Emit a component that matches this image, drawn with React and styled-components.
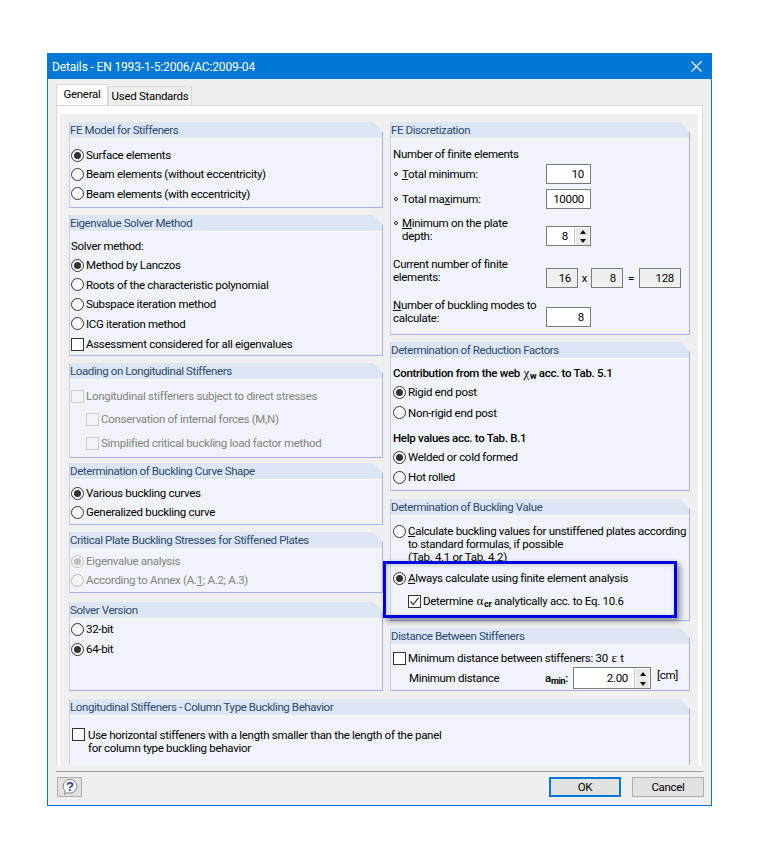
import React from "react";
import styled, { createGlobalStyle } from "styled-components";

const GlobalStyle = createGlobalStyle`
  body {
    margin: 0;
    background: #fff;
    font-family: Roboto, "Noto Sans", sans-serif;
    font-size: 11.5px;
    letter-spacing: -0.3px;
    color: #000;
  }
  * { box-sizing: border-box; }
`;

const Page = styled.div`
  padding: 53px 0 0 47px;
`;

const Window = styled.div`
  width: 665px;
  height: 753px;
  border: 1px solid #0078d7;
  background: #f0f0f0;
`;

const TitleBar = styled.div`
  height: 25px;
  background: #0078d7;
  color: #fff;
  font-size: 12px;
  letter-spacing: -0.15px;
  display: flex;
  align-items: center;
  justify-content: space-between;
  padding: 0 9px 0 4px;
`;

const TabStrip = styled.div`
  height: 26px;
  display: flex;
  align-items: flex-end;
  padding-left: 8px;
`;

const Tab = styled.div`
  height: ${(p) => (p.$active ? "21px" : "19px")};
  width: ${(p) => (p.$active ? "52px" : "84px")};
  background: ${(p) => (p.$active ? "#fff" : "#f0f0f0")};
  border: 1px solid #d9d9d9;
  border-bottom: 0;
  white-space: nowrap;
  display: flex;
  align-items: center;
  justify-content: center;
  padding-bottom: ${(p) => (p.$active ? "3px" : "0")};
`;

const TabPane = styled.div`
  height: 660px;
  margin: 0 8px;
  padding: 8px 4px 0 3px;
  border: 1px solid #d9d9d9;
  border-bottom: 0;
  background: #fff;
`;

const PaneInner = styled.div`
  height: 100%;
  background: #f0f0f0;
  padding: 8px 8px 0 9px;
  overflow: hidden;
`;

const Columns = styled.div`
  display: grid;
  grid-template-columns: 314px 300px;
  column-gap: 7px;
`;

const Column = styled.div`
  position: relative;
  display: flex;
  flex-direction: column;
`;

const Panel = styled.section`
  height: ${(p) => p.$h}px;
  margin-top: ${(p) => p.$mt || 0}px;
  background: #f0f4fa;
  border-left: 1px solid #c4ccf0;
  border-right: 1px solid #a9aeec;
  border-bottom: 1px solid #a9aeec;
  clip-path: polygon(0 0, calc(100% - 10px) 0, 100% 10px, 100% 100%, 0 100%);
`;

const PanelTitle = styled.div`
  height: 17px;
  line-height: 16px;
  background: #dce6f4;
  border-bottom: 1px solid #fff;
  color: #2b4a72;
  letter-spacing: -0.4px;
`;

const PanelBody = styled.div`
  padding: ${(p) => p.$pt || 0}px 0 0 ${(p) => (p.$right ? 2 : 1)}px;
`;

const Row = styled.div`
  display: flex;
  align-items: center;
  gap: 2px;
  height: ${(p) => p.$h || 20}px;
  margin-top: ${(p) => p.$mt || 0}px;
  margin-left: ${(p) => p.$indent || 0}px;
  color: ${(p) => (p.$disabled ? "#838383" : "#000")};
`;

const TopRow = styled(Row)`
  align-items: flex-start;
`;

const WideRow = styled(TopRow)`
  gap: 3px;
`;

const Lines = styled.div`
  line-height: 13px;
  margin-top: ${(p) => p.$mt || 0}px;
`;

const Strong = styled.span`
  font-weight: 500;
`;

const RadioMark = styled.span`
  flex: none;
  width: 13px;
  height: 13px;
  border-radius: 50%;
  border: 1px solid ${(p) => (p.$disabled ? "#bdbdbd" : "#333")};
  background: ${(p) => (p.$disabled ? "#f4f4f4" : "#fff")};
  display: flex;
  align-items: center;
  justify-content: center;

  &::after {
    content: "";
    display: ${(p) => (p.$checked ? "block" : "none")};
    width: 7px;
    height: 7px;
    border-radius: 50%;
    background: ${(p) => (p.$disabled ? "#bdbdbd" : "#333")};
  }
`;

const CheckMark = styled.span`
  flex: none;
  width: 13px;
  height: 13px;
  border: 1px solid ${(p) => (p.$disabled ? "#cccccc" : "#333")};
  background: ${(p) => (p.$disabled ? "#f4f4f4" : "#fff")};
  display: flex;
  align-items: center;
  justify-content: center;
`;

const FieldRow = styled.div`
  display: grid;
  grid-template-columns: 153px auto;
  align-items: ${(p) => (p.$top ? "start" : "center")};
  height: ${(p) => p.$h || 20}px;
  margin-top: ${(p) => p.$mt || 0}px;
`;

const Bullet = styled.span`
  display: inline-block;
  width: 4px;
  height: 4px;
  border: 1px solid #222;
  border-radius: 50%;
  margin: 0 4px 1px 1px;
  vertical-align: middle;
`;

const HangIndent = styled.div`
  padding-left: 9px;
`;

const Field = styled.div`
  position: relative;
  display: flex;
  align-items: center;
  justify-content: flex-end;
  width: ${(p) => p.$w || 45}px;
  height: ${(p) => p.$height || 20}px;
  margin-top: ${(p) => p.$mt || 0}px;
  padding-right: ${(p) => p.$pr || 6}px;
  border: 1px solid #7a7a7a;
  background: ${(p) => (p.$readOnly ? "#f0f0f0" : "#fff")};
  flex: none;
`;

const SpinBox = styled.div`
  position: absolute;
  top: 0;
  right: 0;
  bottom: 0;
  width: 16px;
  display: flex;
  flex-direction: column;
  gap: 1px;
  padding: 1px 1px 0;
  background: #fff;
  border-left: 1px solid #c8c8c8;
`;

const SpinButton = styled.span`
  flex: 1;
  background: #e8e8e8;
  display: flex;
  align-items: center;
  justify-content: center;

  &::after {
    content: "";
    border-left: 3.5px solid transparent;
    border-right: 3.5px solid transparent;
    ${(p) => (p.$down ? "border-top" : "border-bottom")}: 4px solid #111;
  }
`;

const ProductRow = styled.div`
  display: flex;
  align-items: center;
`;

const Operator = styled.span`
  width: ${(p) => p.$w}px;
  margin-top: 10px;
  text-align: center;
`;

const Greek = styled.span`
  font-family: "Liberation Serif", serif;
  font-size: 13px;
  margin: 0 1px;
`;

const Sub = styled.sub`
  font-size: 9px;
  font-weight: 700;
  line-height: 0;
  vertical-align: -2px;
`;

const DistanceRow = styled.div`
  display: flex;
  align-items: center;
  height: 22px;
  margin-top: -1px;
  padding-left: 16px;
`;

const DistanceLabel = styled.span`
  width: 136px;
`;

const SymbolLabel = styled.span`
  width: 28px;
  font-weight: 500;
  white-space: nowrap;
`;

const Unit = styled.span`
  margin: -6px 0 0 6px;
`;

const WidePanel = styled(Panel)`
  margin-top: 8px;
  height: 70px;
  border-bottom: 0;
`;

const Highlight = styled.div`
  position: absolute;
  z-index: 2;
  top: 439px;
  left: -7px;
  width: 294px;
  height: 57px;
  border: 3px solid #0000e0;
  box-shadow: 3px 3px 6px rgba(0, 0, 0, 0.45), inset 1px 1px 4px rgba(0, 0, 0, 0.2);
  pointer-events: none;
`;

const Footer = styled.div`
  display: flex;
  align-items: flex-start;
  margin: 6px 8px 0;
  padding-top: 5px;
  border-top: 1px solid #a0a0a0;
`;

const HelpButton = styled.button`
  width: 25px;
  height: 20px;
  margin: 0 auto 0 1px;
  padding: 0;
  display: flex;
  align-items: center;
  justify-content: center;
  background: #e1e1e1;
  border: 1px solid #adadad;
`;

const DialogButton = styled.button`
  width: 72px;
  height: 20px;
  margin-left: 11px;
  padding: 0;
  font: inherit;
  letter-spacing: inherit;
  color: #000;
  background: #e1e1e1;
  border: ${(p) => (p.$primary ? "2px solid #0078d7" : "1px solid #adadad")};
  margin-right: ${(p) => (p.$primary ? 0 : -1)}px;
`;

const CloseIcon = () => (
  <svg width="11" height="11" viewBox="0 0 11 11">
    <path d="M0.5 0.5 10.5 10.5M10.5 0.5 0.5 10.5" stroke="#fff" strokeWidth="1.1" fill="none" />
  </svg>
);

const Tick = () => (
  <svg width="11" height="11" viewBox="0 0 11 11">
    <path d="M1.5 5.5 4.2 8.5 9.5 1.8" stroke="#333" strokeWidth="1.2" fill="none" />
  </svg>
);

const HelpIcon = () => (
  <svg width="18" height="18" viewBox="0 0 18 18">
    <path d="M9 1.5a7 6.8 0 0 1 0 13.6c-1 0-2-.2-2.8-.6L3.4 16.5l.7-3.4A6.8 6.8 0 0 1 9 1.5z" fill="#fbfbfb" stroke="#7c8794" />
    <text x="9" y="13" textAnchor="middle" fontSize="13" fontWeight="700" fontFamily="Liberation Sans, sans-serif" fill="#27408b">?</text>
  </svg>
);

const Radio = ({ checked, disabled, children, ...rest }) => (
  <Row $disabled={disabled} {...rest}>
    <RadioMark $checked={checked} $disabled={disabled} />
    <span>{children}</span>
  </Row>
);

const Check = ({ checked, disabled, children, ...rest }) => (
  <Row $disabled={disabled} {...rest}>
    <CheckMark $disabled={disabled}>{checked && <Tick />}</CheckMark>
    <span>{children}</span>
  </Row>
);

const Spin = () => (
  <SpinBox>
    <SpinButton />
    <SpinButton $down />
  </SpinBox>
);

const GroupPanel = ({ title, h, mt, pt, right, children }) => (
  <Panel $h={h} $mt={mt}>
    <PanelTitle>{title}</PanelTitle>
    <PanelBody $pt={pt} $right={right}>
      {children}
    </PanelBody>
  </Panel>
);

const App = () => (
  <Page>
    <GlobalStyle />
    <Window>
      <TitleBar>
        <span>Details - EN 1993-1-5:2006/AC:2009-04</span>
        <CloseIcon />
      </TitleBar>
      <TabStrip>
        <Tab $active>General</Tab>
        <Tab>Used Standards</Tab>
      </TabStrip>
      <TabPane>
        <PaneInner>
          <Columns>
            <Column>
              <GroupPanel title="FE Model for Stiffeners" h={86} pt={6}>
                <Radio checked>Surface elements</Radio>
                <Radio $h={18}>Beam elements (without eccentricity)</Radio>
                <Radio $h={21}>Beam elements (with eccentricity)</Radio>
              </GroupPanel>
              <GroupPanel title="Eigenvalue Solver Method" h={141} mt={7} pt={4}>
                <Row>Solver method:</Row>
                <Radio checked $h={18}>Method by Lanczos</Radio>
                <Radio $h={21}>Roots of the characteristic polynomial</Radio>
                <Radio $h={18}>Subspace iteration method</Radio>
                <Radio $h={21}>ICG iteration method</Radio>
                <Check>Assessment considered for all eigenvalues</Check>
              </GroupPanel>
              <GroupPanel title="Loading on Longitudinal Stiffeners" h={95} mt={7} pt={6}>
                <Check disabled>
                  Lon<u>g</u>itudinal stiffeners subject to direct stresses
                </Check>
                <Check disabled $h={26} $indent={15}>Conservation of internal forces (M,N)</Check>
                <Check disabled $h={22} $indent={15}>Simplified critical buckling load factor method</Check>
              </GroupPanel>
              <GroupPanel title="Determination of Buckling Curve Shape" h={62} mt={5} pt={3}>
                <Radio checked>Various buckling curves</Radio>
                <Radio $h={18}>Generalized buckling curve</Radio>
              </GroupPanel>
              <GroupPanel title="Critical Plate Buckling Stresses for Stiffened Plates" h={61} mt={7} pt={2}>
                <Radio checked disabled>Eigenvalue analysis</Radio>
                <Radio disabled $h={18}>
                  According to Annex (A.<u>1</u>; A.2; A.3)
                </Radio>
              </GroupPanel>
              <GroupPanel title="Solver Version" h={89} mt={9}>
                <Radio>32-bit</Radio>
                <Radio checked>64-bit</Radio>
              </GroupPanel>
            </Column>
            <Column>
              <GroupPanel title="FE Discretization" h={213} pt={5} right>
                <FieldRow>Number of finite elements</FieldRow>
                <FieldRow>
                  <span>
                    <Bullet />
                    <u>T</u>otal minimum:
                  </span>
                  <Field>10</Field>
                </FieldRow>
                <FieldRow $mt={5}>
                  <span>
                    <Bullet />
                    Total ma<u>x</u>imum:
                  </span>
                  <Field>10000</Field>
                </FieldRow>
                <FieldRow $top $h={29} $mt={8}>
                  <Lines>
                    <Bullet />
                    <u>M</u>inimum on the plate
                    <HangIndent>depth:</HangIndent>
                  </Lines>
                  <Field $mt={9} $pr={22}>
                    8
                    <Spin />
                  </Field>
                </FieldRow>
                <FieldRow $top $h={30} $mt={12}>
                  <Lines>
                    Current number of finite
                    <br />
                    elements:
                  </Lines>
                  <ProductRow>
                    <Field $w={32} $mt={10} $readOnly>16</Field>
                    <Operator $w={13}>x</Operator>
                    <Field $w={32} $mt={10} $readOnly>8</Field>
                    <Operator $w={16}>=</Operator>
                    <Field $w={42} $mt={10} $readOnly>128</Field>
                  </ProductRow>
                </FieldRow>
                <FieldRow $top $h={28} $mt={11}>
                  <Lines>
                    <u>N</u>umber of buckling modes to
                    <br />
                    calculate:
                  </Lines>
                  <Field $mt={8}>8</Field>
                </FieldRow>
              </GroupPanel>
              <GroupPanel title="Determination of Reduction Factors" h={149} mt={7} pt={4} right>
                <Row $h={19}>
                  <Strong>
                    Contribution from the web <Greek>χ</Greek>
                    <Sub>w</Sub> acc. to Tab. 5.1
                  </Strong>
                </Row>
                <Radio checked>Rigid end post</Radio>
                <Radio $h={21}>Non-rigid end post</Radio>
                <Row $mt={5}>
                  <Strong>Help values acc. to Tab. B.1</Strong>
                </Row>
                <Radio checked $h={18}>Welded or cold formed</Radio>
                <Radio $h={22}>Hot rolled</Radio>
              </GroupPanel>
              <GroupPanel title="Determination of Buckling Value" h={122} mt={8} pt={9} right>
                <TopRow $h={40}>
                  <RadioMark />
                  <Lines>
                    <u>C</u>alculate buckling values for unstiffened plates according
                    <br />
                    to standard formulas, if possible
                    <br />
                    (Tab. 4.1 or Tab. 4.2)
                  </Lines>
                </TopRow>
                <Radio checked $h={20} $mt={3}>
                  <u>A</u>lways calculate using finite element analysis
                </Radio>
                <Check checked $h={26} $indent={15}>
                  Determine <Greek>α</Greek>
                  <Sub>cr</Sub> analytically acc. to Eq. 10.6
                </Check>
              </GroupPanel>
              <GroupPanel title="Distance Between Stiffeners" h={63} mt={7} pt={3} right>
                <Check $h={20}>
                  Minimum distance between stiffeners: 30 <Greek>ε</Greek> t
                </Check>
                <DistanceRow>
                  <DistanceLabel>Minimum distance</DistanceLabel>
                  <SymbolLabel>
                    a<Sub>min</Sub>:
                  </SymbolLabel>
                  <Field $w={78} $height={22} $pr={22}>
                    2.00
                    <Spin />
                  </Field>
                  <Unit>[cm]</Unit>
                </DistanceRow>
              </GroupPanel>
              <Highlight />
            </Column>
          </Columns>
          <WidePanel>
            <PanelTitle>Longitudinal Stiffeners - Column Type Buckling Behavior</PanelTitle>
            <PanelBody $pt={12} $right>
              <WideRow $h={28}>
                <CheckMark />
                <Lines $mt={1}>
                  Use horizontal stiffeners with a length smaller than the length of the panel
                  <br />
                  for column type buckling behavior
                </Lines>
              </WideRow>
            </PanelBody>
          </WidePanel>
        </PaneInner>
      </TabPane>
      <Footer>
        <HelpButton aria-label="Help">
          <HelpIcon />
        </HelpButton>
        <DialogButton $primary>OK</DialogButton>
        <DialogButton>Cancel</DialogButton>
      </Footer>
    </Window>
  </Page>
);

export default App;
